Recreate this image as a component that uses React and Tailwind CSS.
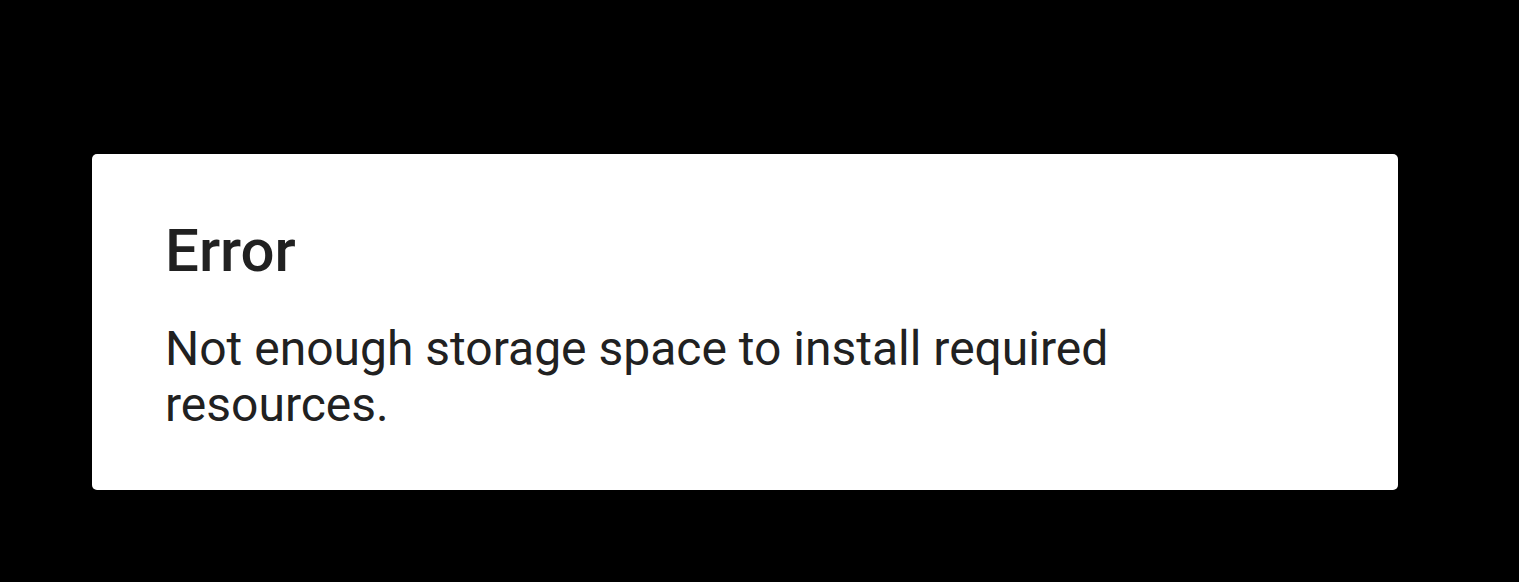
import React from 'react';

const App = () => {
  return (
    <div className="min-h-[582px] w-full bg-black pl-[92px] pt-[154px] font-['Roboto',sans-serif]">
      {/* Dialog */}
      <div className="w-[1306px] h-[336px] bg-white rounded-[5px] pl-[73px] pr-[73px] pt-[67px]">
        <h2 className="text-[60px] leading-[60px] font-medium text-[#212121]">
          Error
        </h2>
        <p className="mt-[40px] text-[48px] leading-[56px] text-[#212121]">
          Not enough storage space to install required resources.
        </p>
      </div>
    </div>
  );
};

export default App;
